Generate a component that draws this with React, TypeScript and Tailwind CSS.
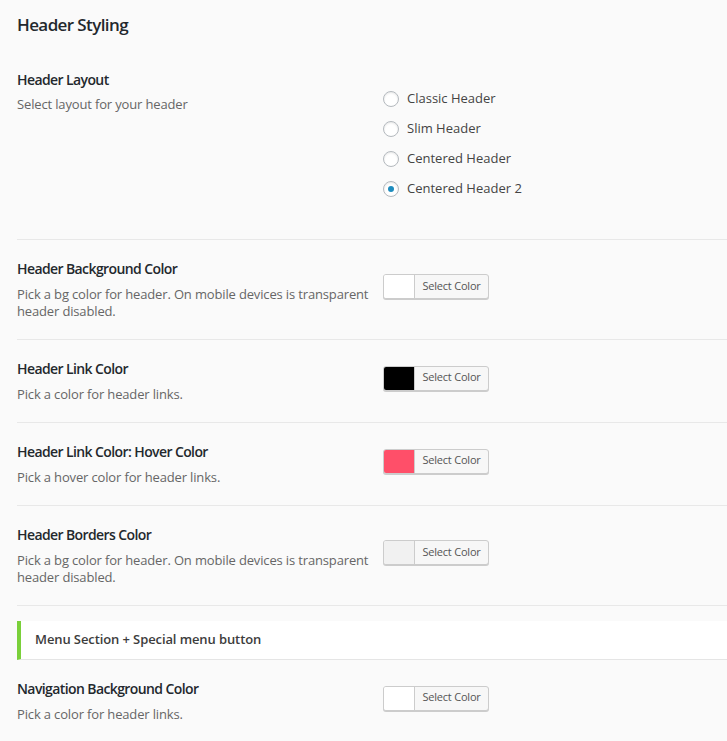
import React from "react";

const font = { fontFamily: '"Open Sans", "Noto Sans", sans-serif' };

function Picker({ color }: { color: string }) {
  return (
    <div className="flex h-[25px] w-[106px] rounded-[3px] border border-[#cccccc] bg-[#f7f7f7] shadow-[0_1px_0_#cccccc] overflow-hidden">
      <div className="w-[31px] h-full border-r border-[#cccccc]" style={{ background: color }} />
      <div className="flex-1 flex items-center justify-center text-[11px] text-[#555555] pb-[1px] tracking-[-0.2px]">Select Color</div>
    </div>
  );
}

function Row({
  title,
  desc,
  color,
  last,
}: {
  title: string;
  desc: React.ReactNode;
  color: string;
  last?: boolean;
}) {
  return (
    <div className={`flex items-center ${last ? "" : "border-b border-[#e8e8e8]"}`}>
      <div className="w-[366px] shrink-0 pt-[19px] pb-[19px]">
        <div className="text-[14px] font-semibold text-[#23282d] leading-[20px] tracking-[-0.6px]">{title}</div>
        <div className="mt-[7px] text-[13px] text-[#666666] leading-[17px] tracking-[-0.15px]">{desc}</div>
      </div>
      <div className="mb-[6px]">
        <Picker color={color} />
      </div>
    </div>
  );
}

function Radio({ label, checked }: { label: string; checked?: boolean }) {
  return (
    <div className="flex items-center h-[30px]">
      <div className="w-[16px] h-[16px] rounded-full border border-[#b4b9be] bg-white flex items-center justify-center shadow-[inset_0_1px_2px_rgba(0,0,0,0.1)]">
        {checked && <div className="w-[6px] h-[6px] rounded-full bg-[#1e8cbe]" />}
      </div>
      <span className="ml-[8px] text-[13px] text-[#444444] tracking-[0px]">{label}</span>
    </div>
  );
}

export default function App() {
  return (
    <div className="min-h-[741px] w-[727px] bg-[#fafafa] pl-[17px] overflow-hidden" style={font}>
      <h2 className="pt-[13px] text-[17px] font-semibold text-[#23282d] leading-[24px] tracking-[-0.6px]">Header Styling</h2>

      <div className="mt-[23px] flex border-b border-[#e8e8e8]">
        <div className="w-[366px] shrink-0 pt-[10px]">
          <div className="text-[14px] font-semibold text-[#23282d] leading-[20px] tracking-[-0.6px]">Header Layout</div>
          <div className="mt-[6px] text-[13px] text-[#666666] leading-[17px] tracking-[-0.15px]">Select layout for your header</div>
        </div>
        <div className="pt-[24px] pb-[35px]">
          <Radio label="Classic Header" />
          <Radio label="Slim Header" />
          <Radio label="Centered Header" />
          <Radio label="Centered Header 2" checked />
        </div>
      </div>

      <Row
        title="Header Background Color"
        desc={
          <>
            Pick a bg color for header. On mobile devices is transparent
            <br />
            header disabled.
          </>
        }
        color="#ffffff"
      />
      <Row title="Header Link Color" desc="Pick a color for header links." color="#000000" />
      <Row title="Header Link Color: Hover Color" desc="Pick a hover color for header links." color="#ff4f69" />
      <Row
        title="Header Borders Color"
        desc={
          <>
            Pick a bg color for header. On mobile devices is transparent
            <br />
            header disabled.
          </>
        }
        color="#f1f1f1"
      />

      <div className="mt-[15px] h-[39px] bg-white border-l-4 border-[#7ad03a] border-b border-b-[#e5e5e5] flex items-center pl-[14px]">
        <span className="text-[13px] font-semibold text-[#3c3c3c] tracking-[-0.1px]">Menu Section + Special menu button</span>
      </div>

      <Row title="Navigation Background Color" desc="Pick a color for header links." color="#ffffff" last />
    </div>
  );
}
